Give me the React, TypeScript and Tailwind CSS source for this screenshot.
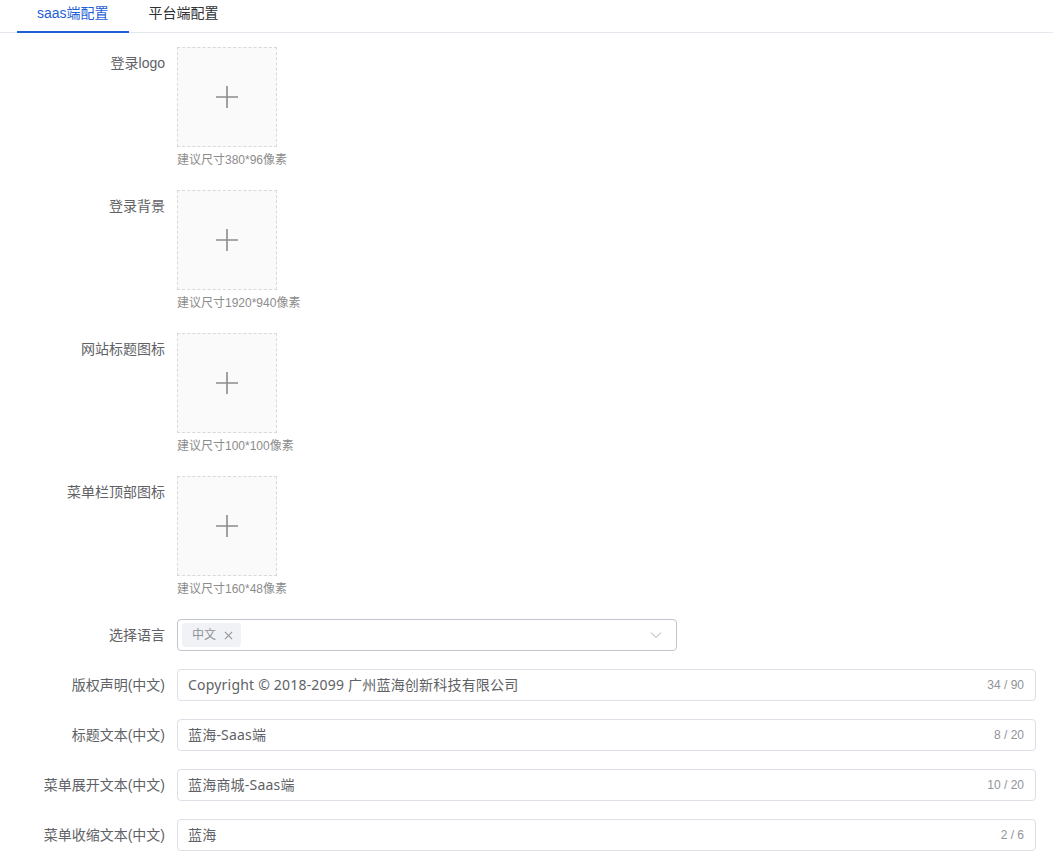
import React from "react";

const FONT = { fontFamily: '"Liberation Sans", "Noto Sans CJK SC", sans-serif' };
const VALUE_FONT = { fontFamily: '"Noto Sans", "Noto Sans CJK SC", sans-serif' };

const UPLOADS = [
  { label: "登录logo", hint: "建议尺寸380*96像素" },
  { label: "登录背景", hint: "建议尺寸1920*940像素" },
  { label: "网站标题图标", hint: "建议尺寸100*100像素" },
  { label: "菜单栏顶部图标", hint: "建议尺寸160*48像素" },
];

const TEXTS = [
  { label: "版权声明(中文)", value: "Copyright © 2018-2099 广州蓝海创新科技有限公司", count: "34 / 90" },
  { label: "标题文本(中文)", value: "蓝海-Saas端", count: "8 / 20" },
  { label: "菜单展开文本(中文)", value: "蓝海商城-Saas端", count: "10 / 20" },
  { label: "菜单收缩文本(中文)", value: "蓝海", count: "2 / 6" },
];

function Label({ children }: { children: React.ReactNode }) {
  return (
    <div className="w-[160px] shrink-0 pr-3 text-right text-sm leading-8 text-[#606266]">
      {children}
    </div>
  );
}

function PlusIcon() {
  return (
    <svg width="24" height="24" viewBox="0 0 24 24" fill="none">
      <path d="M12 1v22M1 12h22" stroke="#8c8c8c" strokeWidth="1.6" />
    </svg>
  );
}

export default function App() {
  return (
    <div className="min-h-screen bg-white" style={FONT}>
      <div className="flex border-b border-[#e4e7ed] pl-[17px]">
        <div className="-mb-px border-b-2 border-[#1f5fd6] px-5 pt-[3px] pb-[8px] text-sm text-[#1f5fd6]">
          saas端配置
        </div>
        <div className="px-5 pt-[3px] pb-[8px] text-sm text-[#303133]">平台端配置</div>
      </div>

      <div className="pt-[14px] pl-[17px] pr-[17px]">
        {UPLOADS.map((u) => (
          <div key={u.label} className="mb-5 flex">
            <Label>{u.label}</Label>
            <div>
              <div className="flex h-[100px] w-[100px] items-center justify-center border border-dashed border-[#d9d9d9] bg-[#fafafa]">
                <PlusIcon />
              </div>
              <div className="mt-[3px] text-xs leading-5 text-[#8c8c8c]">{u.hint}</div>
            </div>
          </div>
        ))}

        <div className="mb-[18px] flex">
          <Label>选择语言</Label>
          <div className="flex h-8 w-[500px] items-center justify-between rounded border border-[#c0c4cc] pl-1 pr-[14px]">
            <span className="flex h-6 items-center gap-[8px] rounded bg-[#f0f2f5] pl-[10px] pr-[8px] text-xs text-[#909399]">
              中文
              <svg width="9" height="9" viewBox="0 0 10 10">
                <path d="M1 1l8 8M9 1l-8 8" stroke="#909399" strokeWidth="1.2" />
              </svg>
            </span>
            <svg width="12" height="12" viewBox="0 0 12 12" fill="none">
              <path d="M1 3.5l5 5 5-5" stroke="#a8abb2" strokeWidth="1" />
            </svg>
          </div>
        </div>

        {TEXTS.map((t) => (
          <div key={t.label} className="mb-[18px] flex">
            <Label>{t.label}</Label>
            <div className="flex h-8 flex-1 items-center justify-between rounded border border-[#dcdfe6] pl-[10px] pr-[11px] text-sm text-[#606266]">
              <span className="tracking-[0.2px]" style={VALUE_FONT}>{t.value}</span>
              <span className="text-xs font-medium text-[#909399]">{t.count}</span>
            </div>
          </div>
        ))}
      </div>
    </div>
  );
}
